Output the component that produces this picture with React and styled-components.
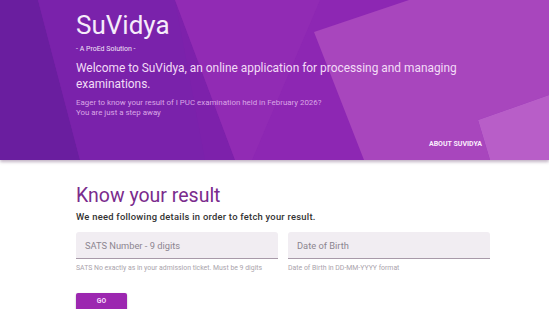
import styled, { createGlobalStyle } from 'styled-components';

const GlobalStyle = createGlobalStyle`
  html, body {
    margin: 0;
    padding: 0;
    background: #ffffff;
    font-family: Roboto, "Liberation Sans", sans-serif;
  }
`;

const Page = styled.div`
  width: 549px;
  height: 309px;
  overflow: hidden;
  background: #fff;
`;

const Hero = styled.header`
  position: relative;
  height: 160px;
  background: #7d21ab;
  box-shadow: 0 2px 3px rgba(80, 40, 90, 0.35);
  overflow: hidden;
  z-index: 1;
`;

const HeroArt = styled.svg`
  position: absolute;
  inset: 0;
  width: 100%;
  height: 100%;
`;

const HeroInner = styled.div`
  position: relative;
  height: 100%;
  box-sizing: border-box;
  padding: 10px 67px 0 76px;
  display: flex;
  flex-direction: column;
  color: #fff;
`;

const Brand = styled.h1`
  margin: 0;
  font-size: 26px;
  font-weight: 400;
  line-height: 30px;
  color: #f6ecfa;
`;

const Tagline = styled.div`
  margin-top: 5px;
  font-size: 7px;
  line-height: 8px;
  color: #f1e2f6;
`;

const Lead = styled.p`
  margin: 7px 0 0;
  font-size: 11.9px;
  line-height: 16px;
  color: #f3dcf7;
`;

const Note = styled.p`
  margin: 6px 0 0;
  font-size: 7.9px;
  line-height: 10px;
  color: #d9a6e6;
`;

const AboutLink = styled.a`
  align-self: flex-end;
  margin-top: auto;
  margin-bottom: 12px;
  font-size: 7px;
  font-weight: 700;
  color: #fbeefe;
  text-decoration: none;
`;

const Main = styled.main`
  padding: 24px 0 0 76px;
`;

const Title = styled.h2`
  margin: 0;
  font-size: 19.5px;
  font-weight: 400;
  line-height: 24px;
  color: #7a2b8d;
`;

const Sub = styled.p`
  margin: 3px 0 0;
  font-size: 9.4px;
  font-weight: 500;
  letter-spacing: 0.25px;
  color: #333;
`;

const Fields = styled.div`
  display: grid;
  grid-template-columns: 202px 202px;
  column-gap: 10px;
  margin-top: 10px;
`;

const Field = styled.div`
  display: flex;
  flex-direction: column;
`;

const Input = styled.div`
  height: 27px;
  box-sizing: border-box;
  padding: 0 9px;
  display: flex;
  align-items: center;
  background: #f1edf2;
  border-radius: 3px 3px 0 0;
  border-bottom: 1px solid #a89aa9;
  font-size: 9.3px;
  color: #8c8590;
`;

const Hint = styled.div`
  margin-top: 5px;
  font-size: 6.9px;
  color: #aaa4ac;
`;

const GoButton = styled.button`
  margin-top: 21px;
  width: 51px;
  height: 20px;
  border: none;
  border-radius: 2px;
  background: #9c27b0;
  color: #f7dcfc;
  font-family: inherit;
  font-size: 6.8px;
  font-weight: 700;
  padding: 0 0 4px;
  box-shadow: 0 1px 2px rgba(0, 0, 0, 0.3);
`;

const App = () => (
  <Page>
    <GlobalStyle />
    <Hero>
      <HeroArt viewBox="0 0 549 160" preserveAspectRatio="none">
        <polygon points="0,0 38,0 80,160 0,160" fill="#6a1e9f" />
        <polygon points="38,0 175,0 205,160 80,160" fill="#7a22ab" />
        <polygon points="175,0 549,0 549,160 235,160" fill="#8d27b3" />
        <polygon points="175,0 320,0 252,160 235,160" fill="#9630b6" opacity="0.5" />
        <polygon points="409,0 549,0 549,95 478,120 490,160 364,160 314,32" fill="#a846bd" />
        <polygon points="478,120 549,95 549,160 490,160" fill="#b85ec8" />
      </HeroArt>
      <HeroInner>
        <Brand>SuVidya</Brand>
        <Tagline>- A ProEd Solution -</Tagline>
        <Lead>Welcome to SuVidya, an online application for processing and managing examinations.</Lead>
        <Note>
          Eager to know your result of I PUC examination held in February 2026?
          <br />
          You are just a step away
        </Note>
        <AboutLink href="#">ABOUT SUVIDYA</AboutLink>
      </HeroInner>
    </Hero>
    <Main>
      <Title>Know your result</Title>
      <Sub>We need following details in order to fetch your result.</Sub>
      <Fields>
        <Field>
          <Input>SATS Number - 9 digits</Input>
          <Hint>SATS No exactly as in your admission ticket. Must be 9 digits</Hint>
        </Field>
        <Field>
          <Input>Date of Birth</Input>
          <Hint>Date of Birth in DD-MM-YYYY format</Hint>
        </Field>
      </Fields>
      <GoButton>GO</GoButton>
    </Main>
  </Page>
);

export default App;
